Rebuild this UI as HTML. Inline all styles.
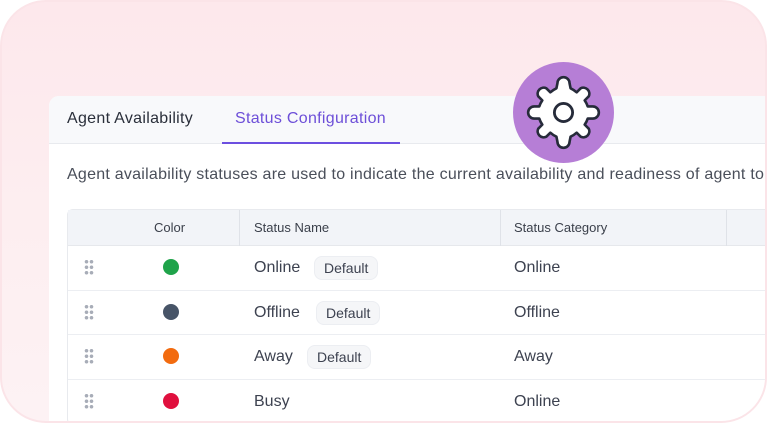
<!DOCTYPE html>
<html><head><style>
*{margin:0;padding:0;box-sizing:border-box}
html,body{width:768px;height:425px;overflow:hidden}
body{background:#fff;font-family:"Liberation Sans",sans-serif;position:relative}
.frame{position:absolute;left:0;top:0;width:767px;height:423px;border-radius:46px;background:linear-gradient(180deg,#fde8ec 0%,#fdeef0 50%,#fdf2f4 100%);border:2px solid #fbe4e8;overflow:hidden}
.card{position:absolute;left:47px;top:94px;width:730px;height:327px;background:#fff;border-radius:10px 0 0 0;overflow:hidden}
.tabs{height:48px;background:#f8f9fb;border-bottom:1px solid #e8eaee;position:relative}
.tab{position:absolute;top:14px;font-size:16px;letter-spacing:0.3px;color:#2a2f3a}
.t2{color:#6d4fd8}
.ul{position:absolute;left:173px;top:46px;width:178px;height:2px;background:#6c4fe0}
.desc{position:absolute;left:18px;top:70px;font-size:16px;letter-spacing:0.25px;color:#4a4f5a;white-space:nowrap}
.table{position:absolute;left:18px;top:113px;width:730px;border:1px solid #e8eaee;border-radius:6px}
.hd{height:36px;background:#f2f4f8;position:relative;border-bottom:1px solid #e6e8ec;font-size:13px;color:#3a3f4a}
.hd span{position:absolute;top:10px}
.sep{position:absolute;top:0;width:1px;height:36px;background:#dfe2e8}
.row{height:44.5px;position:relative;border-bottom:1px solid #eceef2;font-size:16px;color:#3d4250}
.row span{position:absolute;top:13px}
.dot{position:absolute;left:95px;top:13px;width:16px;height:16px;border-radius:50%}
.drag{position:absolute;left:16px;top:13px;width:10px;height:16px;background:radial-gradient(circle,#a8adb8 1.6px,transparent 2px) 0 0/5px 5.5px}
.badge{position:absolute;top:10px;font-size:14px;color:#3d4250;background:#f5f6f8;border:1px solid #eceef2;border-radius:8px;padding:3px 9px}
.gear{position:absolute;left:511px;top:60px;width:101px;height:101px;border-radius:50%;background:#b67ed6}
</style></head><body>
<div class="frame">
<div class="card">
<div class="tabs">
<div class="tab" style="left:18px">Agent Availability</div>
<div class="tab t2" style="left:186px">Status Configuration</div>
<div class="ul"></div>
</div>
<div class="desc">Agent availability statuses are used to indicate the current availability and readiness of agent to</div>
<div class="table">
<div class="hd"><span style="left:86px">Color</span><div class="sep" style="left:171px"></div><span style="left:186px">Status Name</span><div class="sep" style="left:432px"></div><span style="left:446px">Status Category</span><div class="sep" style="left:658px"></div></div>
<div class="row"><div class="drag"></div><div class="dot" style="background:#1fa34a"></div><span style="left:186px">Online</span><div class="badge" style="left:246px">Default</div><span style="left:446px">Online</span></div>
<div class="row"><div class="drag"></div><div class="dot" style="background:#475467"></div><span style="left:186px">Offline</span><div class="badge" style="left:248px">Default</div><span style="left:446px">Offline</span></div>
<div class="row"><div class="drag"></div><div class="dot" style="background:#f26b0f"></div><span style="left:186px">Away</span><div class="badge" style="left:239px">Default</div><span style="left:446px">Away</span></div>
<div class="row"><div class="drag"></div><div class="dot" style="background:#e0103e"></div><span style="left:186px">Busy</span><span style="left:446px">Online</span></div>
</div>
</div>
<div class="gear"><svg width="101" height="101" viewBox="-50 -50 100 100">
<path fill="#fff" stroke="#262b3a" stroke-width="2.6" stroke-linejoin="round" d="M-6,-29 A6,6 0 0 1 6,-29 L7,-24 A24,24 0 0 1 13,-20 L17,-24 A6,6 0 0 1 25,-16 L21,-12 A24,24 0 0 1 24,-6 L29,-6 A6,6 0 0 1 29,6 L24,6 A24,24 0 0 1 21,12 L25,16 A6,6 0 0 1 17,24 L13,20 A24,24 0 0 1 7,24 L6,29 A6,6 0 0 1 -6,29 L-7,24 A24,24 0 0 1 -13,20 L-17,24 A6,6 0 0 1 -25,16 L-21,12 A24,24 0 0 1 -24,6 L-29,6 A6,6 0 0 1 -29,-6 L-24,-6 A24,24 0 0 1 -21,-12 L-25,-16 A6,6 0 0 1 -17,-24 L-13,-20 A24,24 0 0 1 -7,-24 Z"/>
<circle r="9" fill="none" stroke="#262b3a" stroke-width="2.8"/>
</svg></div>
</div>
</body></html>
